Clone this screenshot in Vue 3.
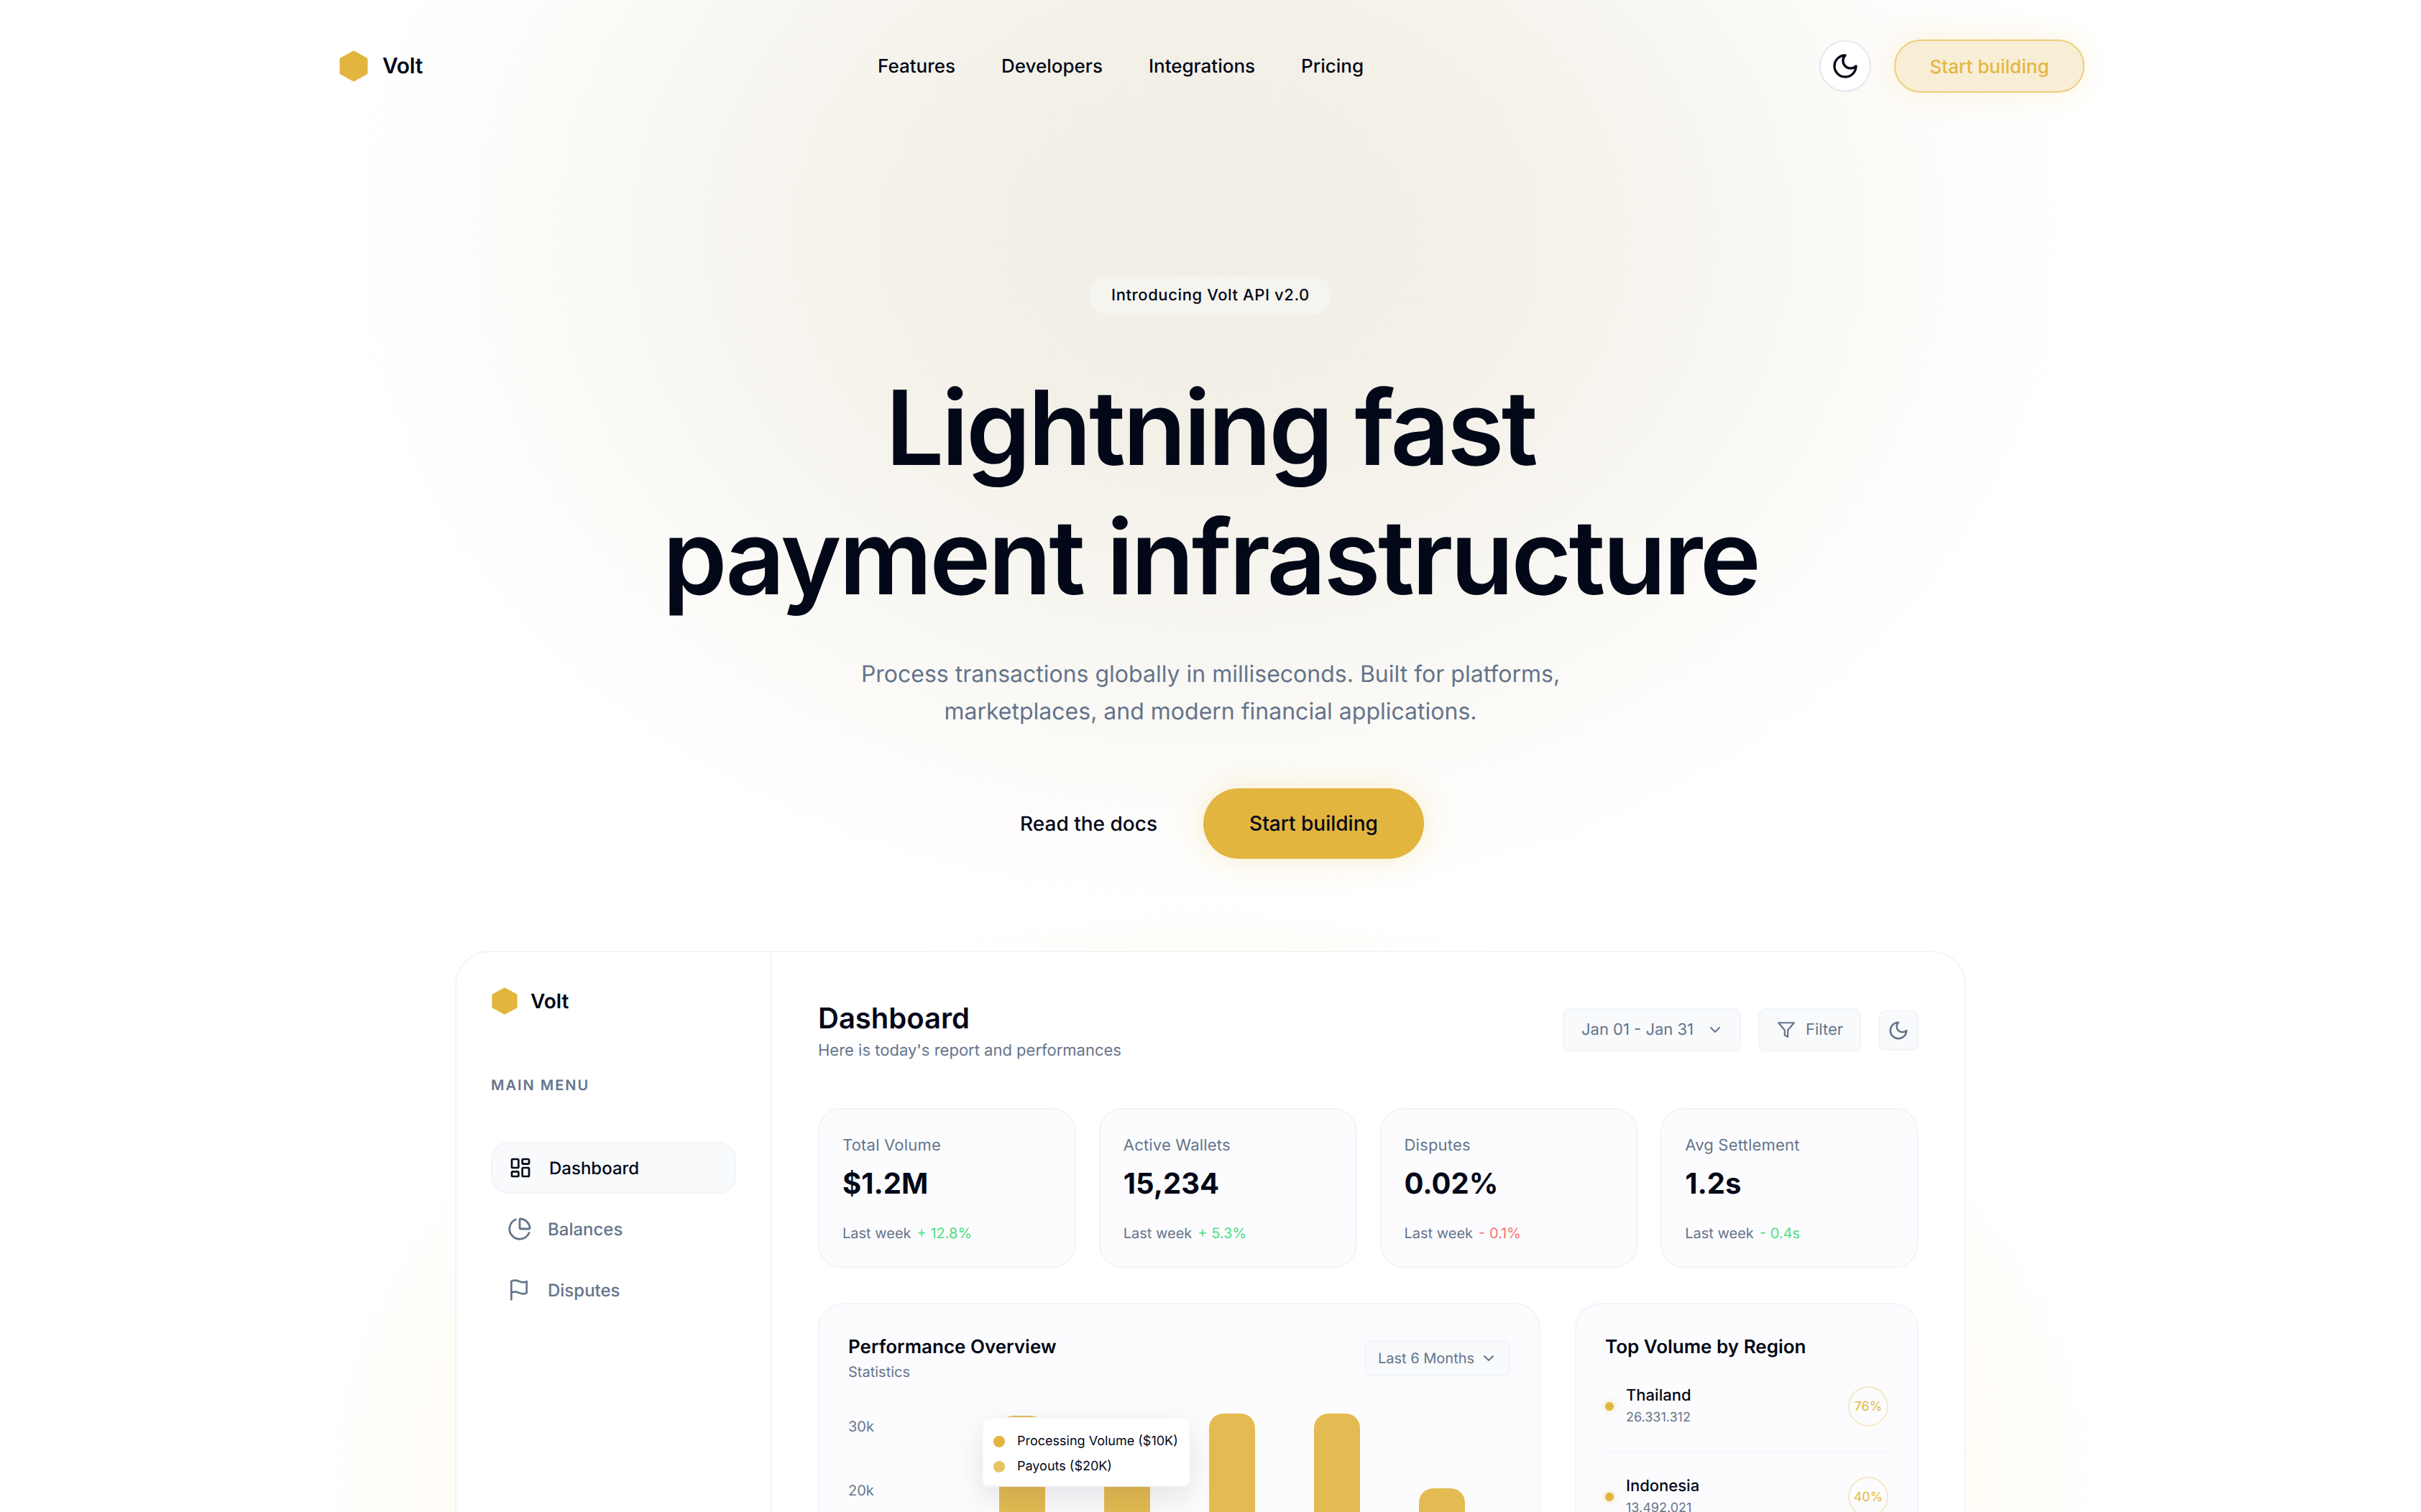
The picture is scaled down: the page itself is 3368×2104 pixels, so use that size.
<script setup>
const navLinks = ["Features", "Developers", "Integrations", "Pricing"];

const stats = [
  { label: "Total Volume", value: "$1.2M", delta: "+ 12.8%", tone: "up" },
  { label: "Active Wallets", value: "15,234", delta: "+ 5.3%", tone: "up" },
  { label: "Disputes", value: "0.02%", delta: "- 0.1%", tone: "down" },
  { label: "Avg Settlement", value: "1.2s", delta: "- 0.4s", tone: "up" },
];

// tops are in px below the chart's top edge
const bars = [
  { top: 3 },
  { top: 20 },
  { top: 0 },
  { top: 0 },
  { top: 104 },
];

const regions = [
  { name: "Thailand", amount: "26.331.312", share: "76%" },
  { name: "Indonesia", amount: "13.492.021", share: "40%" },
];
</script>

<template>
  <div class="page">
    <div class="glow glow-top"></div>
    <div class="glow glow-bottom"></div>

    <header class="nav">
      <div class="brand">
        <svg class="hex" width="40" height="44" viewBox="0 0 40 44">
          <polygon points="20,2 38,12 38,32 20,42 2,32 2,12" />
        </svg>
        <span class="brand-name">Volt</span>
      </div>
      <nav class="nav-links">
        <a v-for="link in navLinks" :key="link">{{ link }}</a>
      </nav>
      <div class="nav-actions">
        <button class="theme-btn">
          <svg width="40" height="40" viewBox="0 0 24 24" class="line">
            <path d="M12 3a6 6 0 0 0 9 9 9 9 0 1 1-9-9Z" />
          </svg>
        </button>
        <button class="ghost-btn">Start building</button>
      </div>
    </header>

    <section class="hero">
      <div class="pill">Introducing Volt API v2.0</div>
      <h1>Lightning fast<br />payment infrastructure</h1>
      <p class="lead">
        Process transactions globally in milliseconds. Built for platforms,<br />
        marketplaces, and modern financial applications.
      </p>
      <div class="cta">
        <a class="docs">Read the docs</a>
        <button class="primary-btn">Start building</button>
      </div>
    </section>

    <section class="dash">
      <aside class="side">
        <div class="side-brand">
          <svg class="hex" width="36" height="38" viewBox="0 0 40 44" preserveAspectRatio="none">
            <polygon points="20,2 38,12 38,32 20,42 2,32 2,12" />
          </svg>
          <span class="side-name">Volt</span>
        </div>
        <div class="menu-title">MAIN MENU</div>
        <div class="menu">
          <div class="menu-item active">
            <svg width="32" height="32" viewBox="0 0 24 24" class="line">
              <rect width="7" height="9" x="3" y="3" rx="1" />
              <rect width="7" height="5" x="14" y="3" rx="1" />
              <rect width="7" height="9" x="14" y="12" rx="1" />
              <rect width="7" height="5" x="3" y="16" rx="1" />
            </svg>
            <span>Dashboard</span>
          </div>
          <div class="menu-item">
            <svg width="34" height="34" viewBox="0 0 24 24" class="line">
              <path d="M21 12c.552 0 1.005-.449.95-.998a10 10 0 0 0-8.953-8.951c-.55-.055-.998.398-.998.95v8a1 1 0 0 0 1 1z" />
              <path d="M21.21 15.89A10 10 0 1 1 8 2.83" />
            </svg>
            <span>Balances</span>
          </div>
          <div class="menu-item">
            <svg width="32" height="32" viewBox="0 0 24 24" class="line flag">
              <path d="M4 15s1-1 4-1 5 2 8 2 4-1 4-1V3s-1 1-4 1-5-2-8-2-4 1-4 1z" />
              <line x1="4" x2="4" y1="22" y2="15" />
            </svg>
            <span>Disputes</span>
          </div>
        </div>
      </aside>

      <main class="main">
        <div class="main-head">
          <div>
            <h2>Dashboard</h2>
            <p class="sub">Here is today's report and performances</p>
          </div>
          <div class="controls">
            <div class="ctl ctl-date">
              <span>Jan 01 - Jan 31</span>
              <svg width="24" height="24" viewBox="0 0 24 24" class="line"><path d="m6 9 6 6 6-6" /></svg>
            </div>
            <div class="ctl ctl-filter">
              <svg width="26" height="26" viewBox="0 0 24 24" class="line">
                <polygon points="22 3 2 3 10 12.46 10 19 14 21 14 12.46 22 3" />
              </svg>
              <span>Filter</span>
            </div>
            <div class="ctl ctl-moon">
              <svg width="30" height="30" viewBox="0 0 24 24" class="line">
                <path d="M12 3a6 6 0 0 0 9 9 9 9 0 1 1-9-9Z" />
              </svg>
            </div>
          </div>
        </div>

        <div class="stats">
          <div v-for="s in stats" :key="s.label" class="stat">
            <div class="stat-label">{{ s.label }}</div>
            <div class="stat-value">{{ s.value }}</div>
            <div class="stat-foot">
              <span>Last week</span>
              <span :class="s.tone">{{ s.delta }}</span>
            </div>
          </div>
        </div>

        <div class="lower">
          <div class="panel perf">
            <div class="perf-head">
              <div>
                <h3>Performance Overview</h3>
                <p class="perf-sub">Statistics</p>
              </div>
              <div class="range">
                <span>Last 6 Months</span>
                <svg width="24" height="24" viewBox="0 0 24 24" class="line"><path d="m6 9 6 6 6-6" /></svg>
              </div>
            </div>
            <div class="chart">
              <div class="axis">
                <span>30k</span>
                <span>20k</span>
              </div>
              <div class="bars">
                <div v-for="(b, i) in bars" :key="i" class="bar-col">
                  <div class="bar" :style="{ marginTop: b.top + 'px' }"></div>
                </div>
                <div class="tip">
                  <div class="tip-row"><i class="dot-a"></i>Processing Volume ($10K)</div>
                  <div class="tip-row"><i class="dot-b"></i>Payouts ($20K)</div>
                </div>
              </div>
            </div>
          </div>

          <div class="panel region">
            <h3>Top Volume by Region</h3>
            <div v-for="r in regions" :key="r.name" class="region-row">
              <i class="region-dot"></i>
              <div class="region-text">
                <div class="region-name">{{ r.name }}</div>
                <div class="region-amt">{{ r.amount }}</div>
              </div>
              <div class="share">{{ r.share }}</div>
            </div>
          </div>
        </div>
      </main>
    </section>
  </div>
</template>

<style>
html, body {
  margin: 0;
  background: #fff;
}
</style>

<style scoped>
.page {
  position: relative;
  height: 2104px;
  overflow: hidden;
  background: #fff;
  font-family: Inter, "Noto Sans", sans-serif;
  color: #020817;
  text-rendering: geometricPrecision;
  -webkit-font-smoothing: antialiased;
}

.glow {
  position: absolute;
  pointer-events: none;
}

.glow-top {
  left: 464px;
  top: -620px;
  width: 2440px;
  height: 1900px;
  background: radial-gradient(closest-side, #f1eee5 0%, #f3f0e8 30%, #f8f6f1 58%, #fdfcfa 82%, rgba(255, 255, 255, 0) 100%);
}

.glow-bottom {
  left: 424px;
  top: 1250px;
  width: 2520px;
  height: 1600px;
  background: radial-gradient(closest-side, #fffaf0 0%, #fffbf2 76%, rgba(255, 255, 255, 0) 100%);
}

.nav {
  position: relative;
  width: 2430px;
  height: 184px;
  margin-left: 470px;
  display: flex;
  align-items: center;
}

.brand {
  display: flex;
  align-items: center;
  gap: 20px;
  width: 749px;
  margin-left: 2px;
}

.hex polygon {
  fill: #e2b53e;
  stroke: #e2b53e;
  stroke-width: 3;
  stroke-linejoin: round;
}

.brand-name {
  font-size: 30px;
  font-weight: 600;
  letter-spacing: -0.3px;
}

.nav-links {
  display: flex;
  gap: 64px;
  font-size: 26px;
  font-weight: 500;
}

.nav-actions {
  display: flex;
  align-items: center;
  gap: 32px;
  margin-left: auto;
}

.theme-btn {
  width: 72px;
  height: 72px;
  padding: 0;
  display: flex;
  align-items: center;
  justify-content: center;
  border-radius: 50%;
  border: 2px solid #e2e8f0;
  background: #fff;
  color: #020817;
}

.line {
  fill: none;
  stroke: currentColor;
  stroke-width: 2;
  stroke-linecap: round;
  stroke-linejoin: round;
  flex: none;
}

.ghost-btn {
  width: 265px;
  height: 74px;
  border-radius: 37px;
  border: 2px solid #edcd7e;
  background: #f8eed6;
  color: #e5b742;
  font: 500 26px Inter, sans-serif;
  box-shadow: 0 0 40px rgba(240, 200, 90, 0.22);
}

.hero {
  position: relative;
  display: flex;
  flex-direction: column;
  align-items: center;
  text-align: center;
  padding-top: 198px;
}

.pill {
  height: 58px;
  width: 340px;
  display: flex;
  align-items: center;
  justify-content: center;
  box-sizing: border-box;
  border-radius: 29px;
  border: 2px solid #f1f0ec;
  background: #f6f4ee;
  font-size: 22px;
  font-weight: 500;
  letter-spacing: 0.6px;
}

h1 {
  margin: 65px 0 0;
  font-size: 144px;
  line-height: 180px;
  font-weight: 600;
  letter-spacing: -3.6px;
}

.lead {
  margin: 47px 0 0;
  font-size: 32px;
  line-height: 52px;
  color: #64748b;
}

.cta {
  display: flex;
  align-items: center;
  gap: 64px;
  margin-top: 81px;
  margin-left: 32px;
}

.docs {
  font-size: 28px;
  font-weight: 500;
}

.primary-btn {
  width: 307px;
  height: 98px;
  border: 0;
  border-radius: 49px;
  background: #e2b53e;
  color: #020817;
  font: 500 28px Inter, sans-serif;
  box-shadow: 0 0 40px rgba(240, 200, 90, 0.3);
}

.dash {
  position: relative;
  width: 2102px;
  height: 900px;
  margin: 128px auto 0;
  box-sizing: border-box;
  display: flex;
  background: #fff;
  border: 2px solid #f1f5f9;
  border-radius: 48px 48px 0 0;
}

.side {
  width: 439px;
  flex: none;
  box-sizing: border-box;
  padding: 48px 48px 0;
  border-right: 2px solid #f1f5f9;
}

.side-brand {
  display: flex;
  align-items: center;
  gap: 18px;
  height: 40px;
  margin-left: 1px;
}

.side-name {
  font-size: 28px;
  font-weight: 600;
}

.menu-title {
  margin-top: 85px;
  font-size: 20px;
  font-weight: 600;
  line-height: 24px;
  letter-spacing: 2px;
  color: #64748b;
}

.menu {
  margin-top: 67px;
  width: 341px;
  display: flex;
  flex-direction: column;
  gap: 13px;
}

.menu-item {
  height: 72px;
  display: flex;
  align-items: center;
  gap: 22px;
  padding-left: 23px;
  box-sizing: border-box;
  font-size: 24px;
  font-weight: 500;
  color: #64748b;
}

.menu-item.active {
  background: #f8fafc;
  border: 2px solid #f1f5f9;
  border-radius: 24px;
  color: #020817;
  gap: 24px;
}

.flag {
  margin-right: 2px;
}

.main {
  flex: 1;
  min-width: 0;
  box-sizing: border-box;
  padding: 64px 64px 0;
}

.main-head {
  display: flex;
  justify-content: space-between;
  align-items: flex-start;
  height: 153px;
}

h2 {
  margin: 4px 0 0;
  font-size: 40px;
  line-height: 48px;
  font-weight: 600;
}

.sub {
  margin: 6px 0 0;
  font-size: 22px;
  line-height: 30px;
  color: #64748b;
}

.controls {
  display: flex;
  align-items: center;
  gap: 24px;
  padding-top: 14px;
}

.ctl {
  height: 60px;
  box-sizing: border-box;
  display: flex;
  align-items: center;
  background: #f8fafc;
  border: 2px solid #f1f5f9;
  border-radius: 10px;
  color: #64748b;
  font-size: 22px;
}

.ctl-date {
  width: 248px;
  padding-left: 24px;
  gap: 18px;
}

.ctl-filter {
  width: 143px;
  padding-left: 24px;
  gap: 14px;
}

.ctl-moon {
  width: 56px;
  height: 56px;
  justify-content: center;
  margin-top: 2px;
}

.stats {
  display: grid;
  grid-template-columns: repeat(4, 1fr);
  gap: 32px;
}

.stat {
  height: 222px;
  box-sizing: border-box;
  padding: 35px 32px 0;
  background: #fcfcfe;
  border: 2px solid #f1f5f9;
  border-radius: 32px;
}

.stat-label {
  font-size: 22px;
  line-height: 30px;
  font-weight: 400;
  color: #64748b;
  letter-spacing: 0.2px;
}

.stat-value {
  margin-top: 13px;
  font-size: 40px;
  line-height: 50px;
  font-weight: 700;
}

.stat-foot {
  margin-top: 30px;
  display: flex;
  gap: 8px;
  font-size: 20px;
  line-height: 28px;
  color: #64748b;
}

.up {
  color: #4ade80;
}

.down {
  color: #f87171;
}

.lower {
  display: flex;
  gap: 48px;
  margin-top: 49px;
}

.panel {
  height: 600px;
  box-sizing: border-box;
  background: #fcfcfe;
  border: 2px solid #f1f5f9;
  border-radius: 36px;
}

.perf {
  width: 1005px;
  padding: 40px 40px 0;
}

.region {
  width: 478px;
  padding: 40px 40px 0;
}

h3 {
  margin: 0;
  font-size: 26px;
  line-height: 40px;
  font-weight: 600;
}

.perf-head {
  display: flex;
  justify-content: space-between;
  align-items: flex-start;
}

.perf-sub {
  margin: -1px 0 0;
  font-size: 20px;
  line-height: 30px;
  color: #64748b;
}

.range {
  width: 202px;
  height: 50px;
  margin-top: 10px;
  box-sizing: border-box;
  padding-left: 16px;
  display: flex;
  align-items: center;
  gap: 8px;
  background: #f8fafc;
  border: 2px solid #f1f5f9;
  border-radius: 8px;
  font-size: 20px;
  color: #64748b;
}

.chart {
  display: flex;
  margin-top: 43px;
}

.axis {
  width: 210px;
  display: flex;
  flex-direction: column;
  gap: 61px;
  padding-top: 4px;
  font-size: 20px;
  line-height: 28px;
  color: #64748b;
}

.bars {
  position: relative;
  display: flex;
  gap: 82px;
}

.bar-col {
  width: 64px;
}

.bar {
  height: 400px;
  background: #e4bb52;
  border-radius: 20px 20px 0 0;
}

.tip {
  position: absolute;
  left: -24px;
  top: 5px;
  width: 290px;
  height: 97px;
  box-sizing: border-box;
  padding: 14px 14px 0;
  background: #fff;
  border: 2px solid #f5f6f9;
  border-radius: 8px;
  box-shadow: 0 16px 40px rgba(15, 23, 42, 0.1);
  font-size: 18px;
  color: #020817;
}

.tip-row {
  display: flex;
  align-items: center;
  gap: 17px;
  height: 35px;
  white-space: nowrap;
}

.tip-row i {
  flex: none;
  width: 16px;
  height: 16px;
  border-radius: 50%;
}

.dot-a {
  background: #e2b53e;
}

.dot-b {
  background: #e8c362;
}

.region-row {
  display: flex;
  align-items: center;
  height: 126px;
  border-bottom: 2px solid #f4f6fa;
  box-sizing: border-box;
}

.region-dot {
  flex: none;
  width: 12px;
  height: 12px;
  border-radius: 50%;
  background: #e2b53e;
  box-shadow: 0 0 8px rgba(226, 181, 62, 0.5);
  margin-right: 17px;
}

.region-text {
  flex: 1;
}

.region-name {
  font-size: 22px;
  line-height: 32px;
  font-weight: 500;
}

.region-amt {
  font-size: 18px;
  line-height: 30px;
  color: #64748b;
}

.share {
  flex: none;
  width: 56px;
  height: 56px;
  box-sizing: border-box;
  display: flex;
  align-items: center;
  justify-content: center;
  border: 2px solid #f6e8c6;
  border-radius: 50%;
  font-size: 18px;
  color: #e5b742;
}
</style>
